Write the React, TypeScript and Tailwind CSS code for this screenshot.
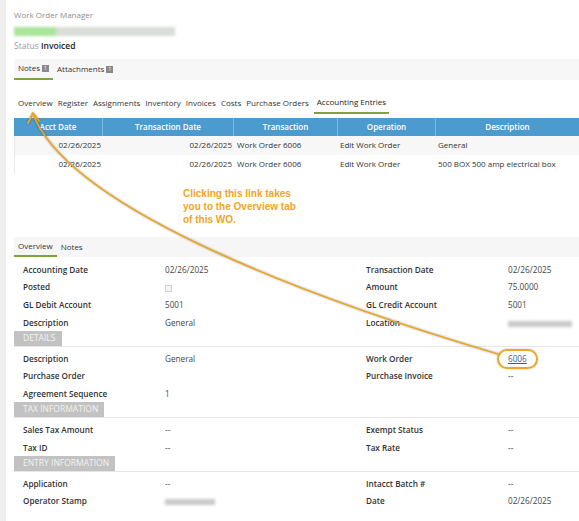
import React from 'react';

const font = { fontFamily: '"Open Sans", "Noto Sans", sans-serif' };

const Badge = ({ n }: { n: string }) => (
  <span className="ml-[2px] inline-flex h-[7px] w-[7px] items-center justify-center bg-[#8a8a8a] text-[5px] leading-none text-white">
    {n}
  </span>
);

const Row = ({ a, b, c, d }: { a: string; b: React.ReactNode; c?: string; d?: React.ReactNode }) => (
  <div className="grid h-[17.8px] grid-cols-[142px_201px_142px_1fr] items-center pl-[9px] text-[8.2px]">
    <div className="font-semibold text-[#333]">{a}</div>
    <div className="text-[#444]">{b}</div>
    <div className="font-semibold text-[#333]">{c}</div>
    <div className="text-[#444]">{d}</div>
  </div>
);

const Section = ({ title, w }: { title: string; w: string }) => (
  <div className="flex h-[15px] items-end border-b border-[#e6e6e6]">
    <div className={`flex h-[15px] items-center bg-[#c2c2c2] pl-[9px] text-[8.5px] uppercase text-[#f2f2f2] ${w}`}>
      {title}
    </div>
  </div>
);

const Blur = ({ w }: { w: string }) => (
  <span className={`inline-block h-[6px] bg-[#c9c9c9] blur-[1.5px] align-middle ${w}`} />
);

export default function App() {
  const tabs = ['Overview', 'Register', 'Assignments', 'Inventory', 'Invoices', 'Costs', 'Purchase Orders'];
  return (
    <div className="relative flex h-[521px] w-[579px] overflow-hidden bg-white text-[8px] text-[#333]" style={font}>
      <div className="w-[6px] shrink-0 bg-[#efefef]" />
      <div className="flex flex-1 flex-col pl-[8px]">
        <div className="pt-[9px] text-[8px] text-[#8c8c8c]">Work Order Manager</div>
        <div className="mt-[6px] flex h-[9px] w-[161px] blur-[1.5px]">
          <div className="w-[42px] bg-[#a9e59a]" />
          <div className="flex-1 bg-[#d9ddd6]" />
        </div>
        <div className="mt-[4px] text-[8.5px]">
          <span className="text-[#9a9a9a]">Status</span> <span className="font-semibold text-[#222]">Invoiced</span>
        </div>

        <div className="mt-[6px] flex h-[21px] items-stretch bg-[#f7f7f7]">
          <div className="flex items-center border-b-2 border-[#7fa43f] px-[4px]">
            Notes <Badge n="1" />
          </div>
          <div className="flex items-center px-[4px]">
            Attachments <Badge n="1" />
          </div>
        </div>

        <div className="mt-[13px] flex h-[21px] items-stretch gap-[5px] pl-[4px] text-[#333]">
          {tabs.map((t) => (
            <div key={t} className="flex items-center">
              {t}
            </div>
          ))}
          <div className="flex items-center border-b-2 border-[#7fa43f] px-[3px] font-medium text-[#222]">Accounting Entries</div>
        </div>

        <div className="mt-[4px]">
          <div className="grid h-[18px] grid-cols-[88px_131px_104px_98px_1fr] bg-[#4c9bcf] font-semibold text-white">
            {['Acct Date', 'Transaction Date', 'Transaction', 'Operation', 'Description'].map((h, i) => (
              <div key={h} className={`flex items-center justify-center ${i > 0 ? 'border-l border-[#7db8de]' : ''}`}>
                {h}
              </div>
            ))}
          </div>
          {[
            ['General', 'bg-[#f7f7f7]'],
            ['500 BOX 500 amp electrical box', 'bg-white'],
          ].map(([d, bg]) => (
            <div key={d} className={`grid h-[19px] grid-cols-[88px_131px_104px_98px_1fr] items-center border-l border-[#e8e8e8] ${bg}`}>
              <div className="pr-[2px] text-right">02/26/2025</div>
              <div className="pr-[2px] text-right">02/26/2025</div>
              <div className="pl-[3px]">Work Order 6006</div>
              <div className="pl-[2px]">Edit Work Order</div>
              <div className="pl-[2px]">{d}</div>
            </div>
          ))}
        </div>

        <div
          className="mt-[13px] pl-[169px] text-[10px] font-bold leading-[13px] text-[#f0a51e]"
          style={{ fontFamily: '"Liberation Sans", Arial, sans-serif' }}
        >
          Clicking this link takes
          <br />
          you to the Overview tab
          <br />
          of this WO.
        </div>

        <div className="mt-[11px] flex h-[20px] items-stretch bg-[#f6f6f6]">
          <div className="flex items-center border-b-2 border-[#7fa43f] px-[4px]">Overview</div>
          <div className="flex items-center px-[4px]">Notes</div>
        </div>

        <div className="pt-[4px]">
          <Row a="Accounting Date" b="02/26/2025" c="Transaction Date" d="02/26/2025" />
          <Row
            a="Posted"
            b={<span className="inline-block h-[7px] w-[7px] border border-[#d0d0d0] bg-[#f4f4f4] align-middle" />}
            c="Amount"
            d="75.0000"
          />
          <Row a="GL Debit Account" b="5001" c="GL Credit Account" d="5001" />
          <Row a="Description" b="General" c="Location" d={<Blur w="w-[64px]" />} />
        </div>
        <Section title="Details" w="w-[48px]" />
        <div className="pt-[3px]">
          <Row
            a="Description"
            b="General"
            c="Work Order"
            d={<span className="text-[#2f5f8f] underline">6006</span>}
          />
          <Row a="Purchase Order" b="" c="Purchase Invoice" d="--" />
          <Row a="Agreement Sequence" b="1" />
        </div>
        <Section title="Tax Information" w="w-[90px]" />
        <div className="pt-[3px]">
          <Row a="Sales Tax Amount" b="--" c="Exempt Status" d="--" />
          <Row a="Tax ID" b="--" c="Tax Rate" d="--" />
        </div>
        <Section title="Entry Information" w="w-[101px]" />
        <div className="pt-[3px]">
          <Row a="Application" b="--" c="Intacct Batch #" d="--" />
          <Row a="Operator Stamp" b={<Blur w="w-[50px]" />} c="Date" d="02/26/2025" />
        </div>
      </div>

      <div className="pointer-events-none absolute left-[497px] top-[349px] h-[20px] w-[41px] rounded-full border-2 border-[#eaa72a] shadow-[0_0_2px_rgba(0,0,0,0.3)]" />
      <svg className="pointer-events-none absolute left-0 top-0" width="579" height="521" viewBox="0 0 579 521">
        <g fill="none" stroke="#e9a728" strokeWidth="1.8" strokeLinecap="round" strokeLinejoin="round" style={{ filter: 'drop-shadow(0 0 1px rgba(0,0,0,0.35))' }}>
          <path d="M33 114 C68 205 292 293 498 354" />
          <path d="M28 123 L33 113 L39 121" />
        </g>
      </svg>
    </div>
  );
}
